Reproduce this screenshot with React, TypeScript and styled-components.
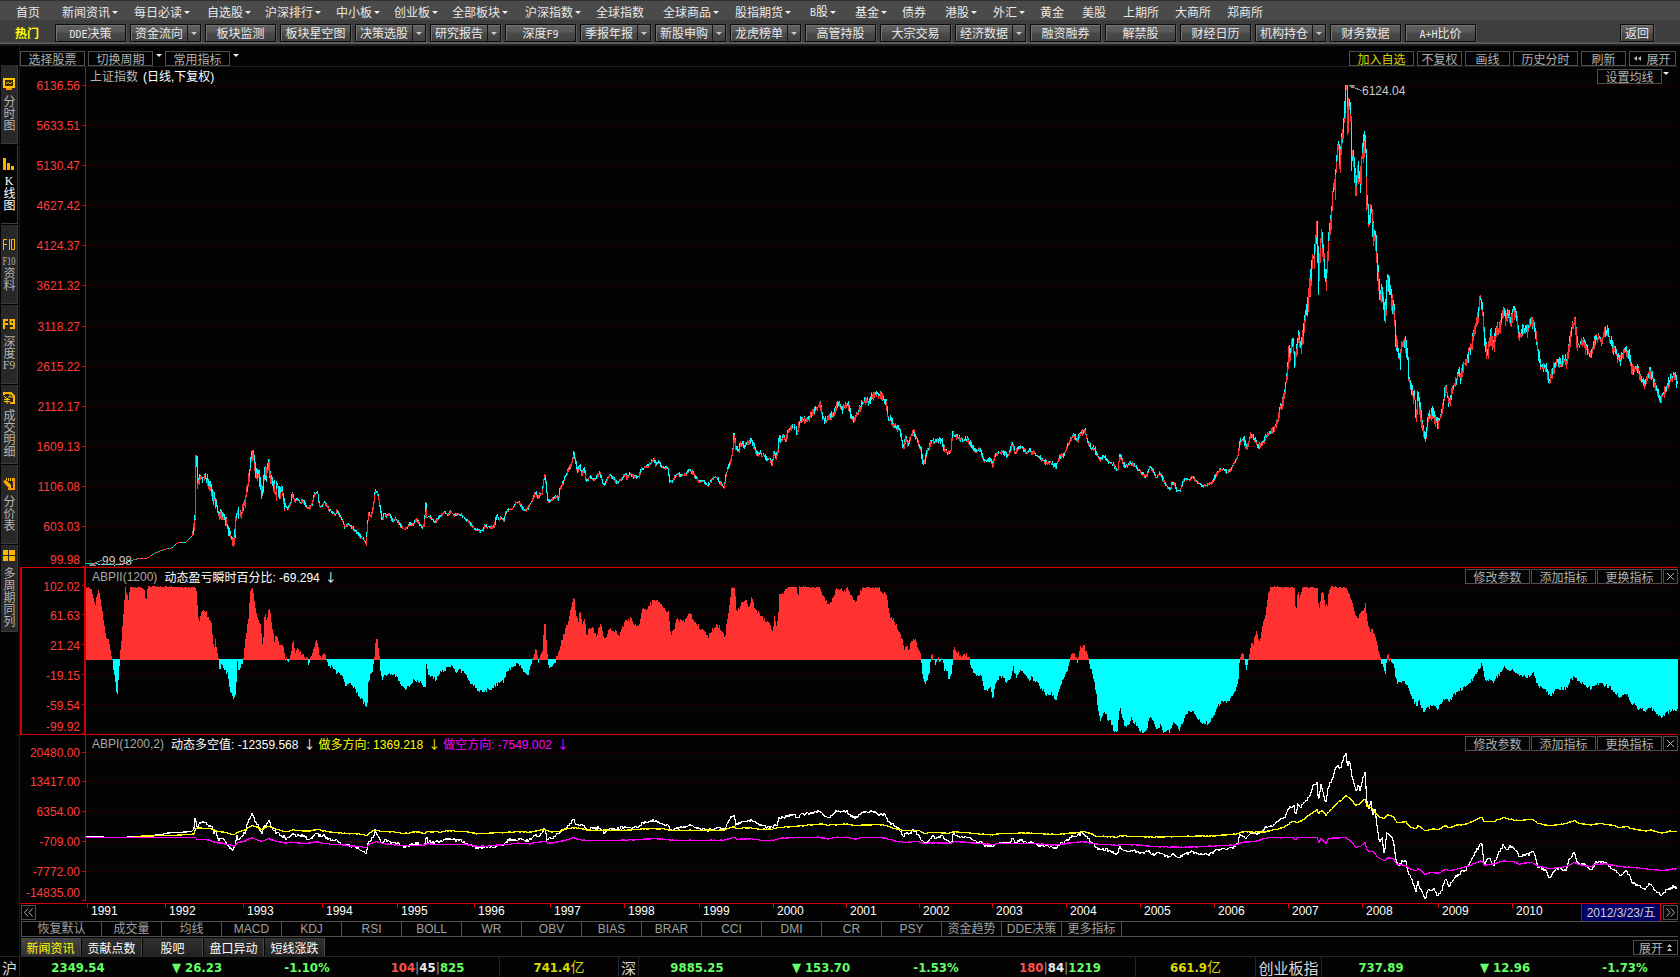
import React from "react";
import styled, { createGlobalStyle, css } from "styled-components";

const RED = "#ff3232";
const CYAN = "#00ffff";
const LINE = "#d20000";
const ARIAL = '"Liberation Sans", Arial, "Noto Sans CJK SC", sans-serif';
const SONG = '"Noto Sans CJK SC", sans-serif';

const Global = createGlobalStyle`
  * { box-sizing: border-box; }
  body { margin: 0; background: #030303; }
  button { margin: 0; padding: 0; border: 0; background: none; font: inherit; color: inherit; cursor: pointer; white-space: nowrap; }
`;

const Page = styled.div`
  display: flex;
  flex-direction: column;
  height: 100vh;
  min-height: 720px;
  background: #030303;
  color: #e8e8e8;
  font-family: ${SONG};
  font-size: 12px;
  line-height: 16px;
  overflow: hidden;
`;

/* ---------- top bars ---------- */

const MenuBar = styled.nav`
  display: grid;
  grid-template-columns:
    46px 72px 73px 58px 71px 58px 58px 73px 71px 67px 72px
    75px 45px 47px 43px 48px 47px 42px 41px 52px 52px 60px;
  align-items: center;
  flex: none;
  height: 20px;
  padding: 2px 0 0 16px;
  border-top: 1px solid #303030;
  background: #4a4a4a;
  overflow: hidden;
`;

const MenuItem = styled.button`
  display: flex;
  align-items: center;
  gap: 2px;
  line-height: 16px;
`;

const Caret = styled.i<{ $color?: string }>`
  width: 0;
  height: 0;
  border: 3px solid transparent;
  border-top-color: ${(p) => p.$color ?? "#f0f0f0"};
  border-bottom-width: 0;
`;

const Latin = styled.span`
  font-family: "DejaVu Sans Mono", monospace;
  font-size: 10px;
`;

const HotBar = styled.div`
  display: flex;
  align-items: center;
  flex: none;
  height: 26px;
  padding: 2px 26px 0 0;
  border-bottom: 2px solid #1c1c1c;
  background: linear-gradient(#3e3e3e, #3e3e3e 22px, #666 23px, #555);
  overflow: hidden;
`;

const HotTitle = styled.span`
  flex: none;
  width: 55px;
  padding-left: 15px;
  color: #ffff00;
  font-weight: 700;
`;

const HotList = styled.div`
  display: flex;
  gap: 4px;
`;

const HotButton = styled.button<{ $narrow?: boolean }>`
  display: flex;
  flex: none;
  justify-content: center;
  width: ${(p) => (p.$narrow ? 34 : 71)}px;
  height: 18px;
  margin-left: ${(p) => (p.$narrow ? "auto" : "0")};
  border: 1px solid #0c0c0c;
  background: linear-gradient(#606060, #585858 7px, #4a4a4a 8px, #404040);
  box-shadow: 1px 1px 0 #585858, inset 1px 1px 0 #747474;
  line-height: 16px;
`;

const HotText = styled.span`
  flex: 1;
  text-align: center;
`;

const HotCaret = styled.span`
  display: flex;
  align-items: center;
  justify-content: center;
  width: 13px;
  border-left: 1px solid #161616;
`;

/* ---------- work area ---------- */

const Work = styled.div`
  display: flex;
  flex: 1;
  min-height: 0;
`;

const SideBar = styled.nav`
  display: flex;
  flex-direction: column;
  gap: 1px;
  flex: none;
  width: 20px;
  padding: 19px 1px 0 1px;
  border-right: 1px solid #1c1c1c;
`;

const SideTab = styled.button<{ $active?: boolean; $tall?: boolean }>`
  display: flex;
  flex-direction: column;
  align-items: center;
  justify-content: center;
  gap: 5px;
  height: ${(p) => (p.$tall ? 87 : 79)}px;
  width: 17px;
  border-right: 1px solid #3c3c3c;
  border-bottom: 1px solid #3c3c3c;
  background: ${(p) => (p.$active ? "#030303" : "#282828")};
  color: ${(p) => (p.$active ? "#ffffff" : "#b4b4b4")};
  svg { display: block; flex: none; }
`;

const SideText = styled.span`
  writing-mode: vertical-rl;
  line-height: 16px;
`;

const Upright = styled.span`
  font-family: "Liberation Serif", serif;
  text-combine-upright: all;
`;

const Main = styled.main`
  display: flex;
  flex-direction: column;
  flex: 1;
  min-width: 0;
  padding-right: 2px;
`;

const ToolBar = styled.div`
  display: flex;
  gap: 3px;
  flex: none;
  height: 21px;
  padding: 5px 2px 0 0;
  border-bottom: 1px solid #1e1e1e;
`;

const Outline = styled.button<{ $w: number; $color?: string }>`
  display: flex;
  align-items: center;
  justify-content: center;
  gap: 4px;
  flex: none;
  width: ${(p) => p.$w}px;
  height: 15px;
  border: 1px solid #505050;
  background: #030303;
  color: ${(p) => p.$color ?? "#b0b0b0"};
  line-height: 13px;
`;

const ToolCaret = styled.button`
  display: flex;
  width: 6px;
  height: 9px;
  padding-top: 3px;
`;

const Spacer = styled.div`
  flex: 1;
`;

/* ---------- chart panels ---------- */

const Panel = styled.section<{ $grow: number; $rule?: boolean }>`
  display: grid;
  grid-template-columns: 61px minmax(0, 1fr);
  grid-template-rows: minmax(0, 1fr);
  flex: ${(p) => p.$grow} 1 0;
  min-height: 0;
  ${(p) => p.$rule && css`border-top: 1px solid ${LINE};`}
`;

const Scale = styled.div<{ $rows: string; $top: number; $boxed?: boolean }>`
  display: grid;
  grid-area: 1 / 1;
  grid-template-rows: ${(p) => p.$rows};
  padding: ${(p) => p.$top}px 1px 0 0;
  border-left: ${(p) => (p.$boxed ? `2px solid ${LINE}` : "0")};
  color: #ff3c3c;
  font-family: ${ARIAL};
  line-height: 14px;
  text-align: right;
`;

const ScaleValue = styled.span`
  min-height: 0;
`;

const Plot = styled.svg`
  grid-area: 1 / 2;
  display: block;
  width: 100%;
  height: 100%;
  shape-rendering: crispEdges;
`;

const PanelHead = styled.header<{ $main?: boolean }>`
  grid-area: 1 / 2;
  display: flex;
  align-items: flex-start;
  align-self: start;
  z-index: 1;
  padding: ${(p) => (p.$main ? "2px 0 0 9px" : "1px 0 0 11px")};
  font-family: ${ARIAL};
`;

const Legend = styled.span<{ $color: string; $space?: number }>`
  margin-right: ${(p) => p.$space ?? 0}px;
  color: ${(p) => p.$color};
  white-space: pre;
`;

const Arrow = styled.span`
  display: inline-block;
  width: 12px;
  margin-left: 5px;
  font-family: ${SONG};
  text-align: center;
`;

const HeadButtons = styled.div<{ $end?: number }>`
  display: flex;
  gap: 1px;
  margin-left: auto;
  padding-right: ${(p) => p.$end ?? 0}px;
  font-family: ${SONG};
`;

const TimeAxis = styled.div`
  display: flex;
  flex: none;
  height: 18px;
  border-top: 1px solid ${LINE};
`;

const TimeStart = styled.div`
  flex: none;
  width: 67px;
  padding: 1px 0 0 1px;
`;

const Years = styled.div`
  display: grid;
  flex: 1;
  grid-template-columns:
    78fr 78fr 79fr 75fr 77fr 76fr 74fr 75fr 74fr 73fr
    73fr 73fr 74fr 74fr 74fr 74fr 74fr 76fr 74fr 69fr;
  min-width: 0;
  color: #ffffff;
  font-family: ${ARIAL};
  line-height: 15px;
`;

const Year = styled.span`
  padding-left: 4px;
  background: linear-gradient(${LINE}, ${LINE}) 0 0 / 1px 4px no-repeat;
`;

const CurrentDate = styled.time`
  flex: none;
  width: 80px;
  border: solid ${LINE};
  border-width: 0 1px;
  background: #000066;
  color: #d0d0d8;
  font-family: ${ARIAL};
  line-height: 18px;
  text-align: center;
`;

const TimeEnd = styled.div`
  padding: 1px 0 0 2px;
`;

/* ---------- bottom ---------- */

const IndicatorBar = styled.nav`
  display: flex;
  flex: none;
  height: 16px;
  margin-left: 1px;
  border: solid #505050;
  border-width: 1px 0 1px 1px;
  overflow: hidden;
`;

const Indicator = styled.button<{ $wide?: boolean }>`
  flex: none;
  width: ${(p) => (p.$wide ? 80 : 60)}px;
  border-right: 1px solid #505050;
  color: #a0a0a0;
  font-family: ${ARIAL};
  line-height: 14px;
`;

const NewsBar = styled.nav`
  display: flex;
  gap: 1px;
  flex: none;
  height: 19px;
  padding: 1px 0 0 1px;
`;

const NewsTab = styled.button<{ $active?: boolean }>`
  width: 60px;
  height: 18px;
  border: solid #484848;
  border-width: 0 1px 0 0;
  background: ${(p) => (p.$active ? "linear-gradient(#484848, #303030)" : "linear-gradient(#303030, #222)")};
  color: ${(p) => (p.$active ? "#ffff00" : "#ffffff")};
  line-height: 17px;
`;

const NewsEnd = styled.div`
  margin-left: auto;
  padding-top: 2px;
`;

const StatusBar = styled.footer`
  display: grid;
  grid-template-columns:
    20px 116fr 122fr 98fr 144fr 119fr 20px 116fr 132fr 98fr 151fr 120fr
    66px 118fr 130fr 110fr;
  flex: none;
  height: 21px;
  border-top: 1px solid #262626;
  color: #64ff64;
  font-family: "DejaVu Sans Condensed", "DejaVu Sans", "Noto Sans CJK SC", sans-serif;
  font-size: 13px;
  font-weight: 700;
  line-height: 22px;
`;

const Cell = styled.span<{ $rule?: boolean }>`
  overflow: hidden;
  border-right: ${(p) => (p.$rule ? "1px solid #262626" : "0")};
  text-align: center;
  white-space: nowrap;
`;

const Market = styled(Cell)`
  color: #d8d8d8;
  font-family: ${SONG};
  font-size: 15px;
  font-weight: 400;
`;

const Amount = styled(Cell)`
  color: #d8d800;
  small { font-family: ${SONG}; font-size: 14px; font-weight: 400; line-height: 16px; }
`;

const Tone = styled.b<{ $color: string }>`
  color: ${(p) => p.$color};
`;

/* ---------- data ---------- */

type Point = [number, number];
type Block = [x0: number, sx: number, y0: number, sy: number, points: string];

/* Each block of samples has its own origin and resolution. */
const decode = (blocks: Block[]): Point[] =>
  blocks.flatMap(([x0, sx, y0, sy, points]) =>
    points.split(" ").map((pair): Point => {
      const [x, y] = pair.split(",").map(Number);
      return [x0 + x / sx, y0 + y / sy];
    })
  );

const price = decode([
  [0, 3, 60, 2.703, "258,1359 345,1364 375,1360 400,1350 420,1346 440,1346 470,1330 500,1320 520,1317 530,1305"],
  [180, 2.904, 380, 3,
    "0,487 18,487 35,468 42,432 44,400 46,235 50,240 52,310 55,300 70,290 80,300 90,325 97,370 98,345 115,410 118,400 130,410 140,445 150,475 157,484 163,420 167,390 172,405 180,395 188,370 195,330 201,290 207,240 211,208 216,240 222,290 228,275 235,320 240,352 246,262 250,290 258,248 265,300 272,310 278,355 281,310 290,340 297,330 303,370 313,388 322,370 327,335 333,365 341,355 350,370 357,360 365,375 373,388 385,370 391,342 400,335 405,380 412,378 420,365 430,385 440,395 452,405 457,390 463,405 472,420 480,443 487,432 500,440 512,457 525,470 535,480 541,495 544,440 548,400 555,410 562,380 566,340 571,330 578,360 584,400 588,425 593,395 600,410 607,400 618,425 626,415 640,435 650,448 660,445 668,430 675,435 687,418 695,430 703,443 710,438 714,362 716,410 727,410 741,428 755,408 770,398 778,405 786,393 795,405 812,402 825,412 840,428 855,446 870,452 880,454 886,438 900,443 912,438 921,405 926,420 933,410 940,425 947,395 956,388 965,388 975,370 985,368 995,385 1005,393 1012,380 1022,365 1033,335 1040,358 1047,335 1050,350 1057,300 1061,280 1064,320 1068,360 1075,365 1085,355 1095,348 1099,362 1103,330 1112,310 1122,285 1132,262 1140,245 1144,220 1148,240 1155,275 1162,255 1167,285 1175,265 1180,305 1190,290 1204,300 1212,288 1220,278 1230,315 1240,300 1249,285 1260,295 1268,308 1280,300 1295,282 1298,298 1307,280 1317,290 1333,292 1340,268 1355,260 1368,248 1377,240 1382,255 1390,245 1400,262 1417,265 1423,305 1430,305 1442,282 1455,285 1468,285 1479,268 1490,280 1508,305 1520,300 1532,318 1545,300"],
  [710, 2.904, 370, 3,
    "8,325 20,322 30,340 42,352 46,320 52,295 60,275 66,245 70,195 76,235 84,245 88,222 95,218 101,235 106,212 112,225 118,207 125,220 132,240 138,255 144,245 152,260 158,255 167,268 174,265 180,284 187,245 192,265 198,240 202,192 207,220 213,192 220,215 226,185 232,178 242,170 250,172 254,195 260,155 268,148 285,150 295,130 305,122 320,104 327,140 338,155 350,140 360,128 368,105 378,108 385,120 400,100 408,130 418,148 430,128 440,105 455,87 461,97 470,82 483,72 495,75 505,88 512,95 518,150 525,145 533,165 543,172 553,182 560,225 564,235 568,200 576,225 583,198 592,185 602,210 612,235 618,275 623,282 628,250 637,235 643,210 652,215 660,212 673,212 680,235 690,250 700,242 704,192 715,200 727,205 735,215 745,205 755,218 765,235 775,245 785,235 795,270 805,275 813,265 822,288 828,255 840,248 852,245 860,255 867,255 875,235 878,217 886,250 895,235 905,232 920,248 930,242 945,253 960,265 978,280 990,278 1005,290 1015,263 1030,250 1040,225 1050,203 1057,198 1067,215 1075,190 1088,182 1097,212 1107,235 1117,235 1127,260 1135,272 1140,260 1148,262 1157,275 1172,285 1184,303 1190,255 1200,280 1207,292 1220,278 1237,290 1252,308 1267,320 1278,290 1287,300 1297,325 1307,308 1317,330 1325,345 1337,362 1341,340 1349,342 1356,362 1365,362 1373,340 1381,325 1392,330 1401,320 1410,332 1430,348 1447,345 1460,335 1468,318 1480,300 1495,298 1502,308 1515,295 1525,275 1532,265"],
  [1180, 3, 80, 3,
    "178,1100 181,1082 192,1078 200,1105 214,1062 225,1080 236,1100 248,1085 265,1065 280,1050 292,1028 300,985 308,970 317,915 323,870 327,810 330,840 337,775 345,845 352,800 357,762 362,805 370,755 377,700 385,660 388,630 393,580 398,530 403,530 408,480 411,440 413,445 416,630 420,520 425,455 430,500 434,560 437,600 442,560 447,470 452,430 457,370 460,320 465,310 470,240 476,190 481,240 485,180 490,160 494,85 498,17 501,17 503,130 508,55 513,120 516,220 520,220 525,280 529,310 534,255 540,295 545,240 550,190 555,165 559,230 560,340 565,380 569,430 574,370 580,450 588,470 592,540 597,600 602,660 607,620 613,690 616,740 620,610 623,580 630,620 637,660 643,680 645,730 650,790 660,835 665,790 675,785 683,820 687,890 695,920 705,960 709,1030 715,935 722,1000 733,1070 740,1055 745,1000 750,1015 758,985 766,1010 773,1035 785,1000 792,960 797,915 808,975 820,920 830,900 838,870 843,895 852,850 860,850 868,810 875,800 883,750 893,715 900,660 905,655 910,710 914,780 923,830 933,755 940,810 950,740 958,755 965,715 973,680 978,715 985,690 991,730 1000,690 1010,710 1018,775 1030,745 1042,755 1050,735 1060,720 1068,770 1075,820 1083,860 1100,865 1108,908 1120,870 1130,845 1142,848 1155,840 1162,850 1168,795 1175,750 1186,722 1192,795 1202,795 1210,780 1218,805 1233,830 1243,785 1258,770 1265,780 1280,748 1290,780 1303,810 1320,840 1335,808 1347,820 1355,870 1367,860 1380,890 1395,915 1410,875 1425,910 1442,960 1458,925 1475,892 1486,890 1492,912"],
]);

const profit = decode([
  [0, 2.8, 560, 3,
    "241,78 255,88 265,138 275,82 285,150 295,230 302,235 313,297 320,350 327,405 334,300 342,195 350,80 359,125 363,78 400,80 408,120 413,78 548,80 555,185 562,160 575,152 584,180 590,178 598,265 602,240 610,297 614,335 618,305 628,330 636,340 643,390 653,418 660,390 663,310 665,285 667,340 680,297 688,220 694,180 700,90 706,82 713,140 722,180 728,190 735,262 740,155 746,180 752,135 760,195 767,240 772,225 780,250 790,250 797,290 805,305 812,285 819,240 825,280 831,265 840,278 850,285 860,297 862,310 868,295 878,260 886,240 893,280 897,297 907,278 912,295 920,315 930,320 940,335 950,335 960,355 966,380 975,365 990,380 1005,405 1018,425 1027,445 1030,360 1040,335 1047,297 1049,245 1055,237 1060,270 1064,330 1070,355 1078,345 1095,335 1105,345 1115,355 1130,385 1145,375 1160,355 1175,365 1190,375 1194,280 1196,340 1205,345 1218,355 1235,330 1262,318 1275,330 1295,330 1310,355 1325,375 1340,390 1375,385 1390,370 1410,360 1420,330 1435,320 1445,305 1455,310 1465,330 1478,345 1487,310 1493,290 1500,265 1506,300 1513,285 1518,270 1522,190 1526,195 1530,260 1533,310 1540,320 1548,310 1555,300 1562,280"],
  [560, 2.8, 560, 3,
    "0,255 10,220 22,180 30,145 38,100 42,150 50,185 55,150 60,190 68,170 74,235 80,205 92,205 100,228 113,187 122,240 130,230 138,200 145,215 157,210 163,232 172,210 181,180 196,177 208,190 220,195 228,150 245,145 262,115 275,125 290,145 303,158 309,220 318,210 326,175 345,185 362,160 375,180 390,205 405,215 413,232 425,210 438,195 450,205 460,235 467,180 474,130 480,80 489,80 492,150 500,145 512,120 520,125 530,142 535,108 545,145 560,165 575,185 587,195 594,218 600,155 603,200 609,180 613,105 625,100 638,78 662,80 665,120 668,78 727,80 735,110 750,130 765,115 773,80 785,88 800,95 803,80 815,110 825,130 840,95 847,80 888,80 900,95 914,105 920,165 930,175 940,195 950,220 957,240 963,270 967,250 975,270 985,240 992,235 1000,262 1010,290 1014,340 1022,368 1033,335 1037,290 1043,285 1050,310 1057,290 1063,300 1070,290 1074,325 1083,330 1088,360 1096,335 1100,265 1113,275 1120,290 1135,283 1145,295 1153,325 1165,345 1178,345 1188,390 1205,380 1211,415 1218,370 1228,350 1240,350 1253,365 1262,345 1268,315 1275,350 1288,325 1298,335 1308,355 1320,350 1333,365 1345,380 1360,400 1375,400 1390,415 1400,370 1412,350 1422,320 1428,290 1438,275 1448,300 1456,262 1467,255 1477,292 1485,325 1492,345 1500,395 1506,455 1513,480 1520,455 1527,455 1532,480 1540,480 1550,510 1560,515 1565,450"],
  [1120, 2.8, 560, 3,
    "0,440 10,490 22,497 30,470 42,490 55,510 72,515 82,470 92,480 100,510 112,495 122,515 140,510 147,480 155,485 165,512 175,480 185,460 203,447 213,470 228,488 248,485 258,470 270,440 285,420 300,425 318,400 330,365 334,290 345,280 353,325 360,297 365,250 372,255 380,210 386,240 392,235 400,190 408,150 412,110 420,78 487,80 489,138 493,140 497,85 502,120 510,78 553,80 555,150 558,150 563,90 570,110 574,138 580,138 583,90 590,78 632,80 645,110 655,150 663,180 673,160 686,135 693,200 700,215 705,205 715,235 724,280 730,300 742,335 748,285 755,297 765,310 772,360 785,370 795,360 803,370 810,400 830,435 835,415 850,455 862,440 875,435 890,445 905,415 920,420 945,390 970,375 990,350 1012,310 1020,355 1035,355 1045,360 1060,340 1075,320 1085,330 1100,325 1118,345 1140,345 1155,335 1170,375 1190,385 1203,405 1220,385 1250,380 1260,355 1272,345 1285,365 1300,370 1318,385 1330,368 1360,372 1378,385 1398,410 1417,400 1430,425 1450,440 1470,450 1485,435 1500,460 1517,470 1530,455 1550,445 1561,447"],
]);

const net = decode([
  [0, 2.8, 740, 3,
    "241,289 286,289 292,292 370,291 410,287 450,284 470,279 500,277 535,275 543,268 547,228 550,255 553,262 560,250 575,248 583,258 592,255 600,280 605,275 612,300 622,295 632,305 640,322 653,328 660,310 664,282 667,300 678,290 688,275 694,245 706,222 713,240 722,255 733,280 740,255 746,260 752,238 760,262 770,275 780,282 795,290 803,298 812,290 820,278 830,288 850,288 862,298 875,290 887,278 893,288 905,285 915,295 930,300 945,300 960,318 975,315 990,320 1010,330 1025,343 1030,310 1037,305 1045,290 1050,272 1060,288 1067,310 1080,300 1095,308 1115,312 1130,322 1150,315 1165,310 1190,315 1194,285 1197,305 1215,308 1235,302 1260,298 1295,303 1310,312 1325,320 1345,325 1370,320 1385,322 1395,315 1410,315 1425,298 1440,303 1455,295 1465,300 1478,302 1490,292 1500,285 1510,295 1518,275 1525,262 1532,298 1545,295 1555,290"],
  [560, 2.8, 560, 3,
    "0,815 15,805 30,790 38,775 45,795 55,795 68,798 75,812 90,805 112,803 122,818 140,808 160,808 180,800 200,803 222,803 230,790 262,782 285,790 303,797 310,812 330,803 362,796 385,803 413,812 440,803 462,808 470,790 480,768 487,768 493,795 510,783 520,788 535,780 550,790 575,800 597,805 601,790 607,800 613,775 635,770 655,763 665,775 675,762 700,760 727,752 735,765 750,775 765,765 775,752 790,757 803,752 812,765 825,773 840,762 855,757 875,752 890,762 905,762 914,768 918,785 935,795 950,808 963,830 967,818 980,820 990,810 1000,820 1010,835 1020,850 1035,840 1040,828 1055,833 1072,828 1080,840 1090,848 1097,845 1101,822 1115,828 1145,832 1160,843 1180,848 1190,858 1205,855 1212,865 1218,855 1232,845 1250,850 1262,845 1268,832 1276,850 1290,840 1305,848 1320,845 1340,855 1355,858 1375,858 1390,865 1400,853 1420,842 1432,828 1450,825 1467,820 1480,835 1492,850 1500,860 1508,868 1530,868 1545,875 1560,882"],
  [1120, 2.8, 560, 3,
    "0,862 20,875 35,870 60,882 80,872 90,885 105,878 125,885 138,893 150,880 165,893 180,882 203,875 220,882 245,885 270,872 290,865 315,865 330,850 334,825 345,828 353,838 362,820 375,818 385,822 395,815 410,800 430,795 450,778 462,768 472,745 487,738 492,765 498,735 505,745 515,730 530,708 540,680 552,668 556,728 563,675 570,705 576,730 583,680 592,665 603,625 612,618 617,630 622,605 633,578 637,620 643,598 650,650 657,680 662,700 668,672 673,695 680,650 686,640 692,730 698,745 702,722 708,765 713,740 720,800 727,850 733,830 740,880 748,815 755,825 765,840 773,905 782,918 790,900 800,905 808,940 820,965 829,995 834,965 842,990 855,1020 862,988 870,995 878,985 890,1008 902,990 911,952 922,980 935,955 950,945 958,928 965,935 975,915 990,885 1003,865 1012,843 1020,912 1035,890 1045,918 1060,880 1073,855 1082,872 1090,860 1108,868 1118,893 1133,882 1145,885 1157,870 1170,920 1190,930 1203,953 1217,930 1230,925 1250,930 1258,895 1272,880 1280,908 1300,912 1318,930 1333,908 1355,905 1370,920 1385,930 1400,948 1417,932 1430,955 1432,965 1450,975 1470,988 1485,970 1500,995 1517,1008 1530,990 1550,980 1561,985"],
]);

const long = decode([
  [0, 2.8, 740, 3,
    "241,292 370,292 400,288 470,287 520,284 543,282 548,265 590,265 610,275 630,277 655,285 665,277 685,270 706,257 720,262 733,268 752,258 775,268 800,275 820,270 862,274 887,268 915,275 960,280 1000,282 1027,286 1035,278 1052,269 1070,275 1095,275 1130,281 1165,275 1190,280 1194,275 1235,276 1255,272 1300,275 1335,281 1370,279 1410,278 1450,275 1480,277 1525,268 1540,276 1560,274"],
  [560, 2.8, 560, 3,
    "0,813 15,808 38,803 60,806 80,811 180,811 250,806 290,807 310,811 460,811 470,806 487,800 495,806 535,803 560,808 595,808 612,802 660,799 727,792 750,796 803,792 825,797 890,793 914,797 935,805 963,811 1005,812 1022,821 1040,817 1085,820 1105,815 1145,819 1190,823 1212,825 1228,821 1300,819 1345,821 1390,824 1425,820 1467,815 1490,822 1500,828 1560,832"],
  [1120, 2.8, 560, 3,
    "0,828 100,831 180,829 260,828 325,822 345,815 400,817 440,808 462,800 485,783 495,788 510,782 530,765 552,750 556,762 565,750 577,765 595,745 612,725 620,722 633,706 645,715 660,735 673,730 686,718 692,740 705,745 725,770 740,775 750,765 765,770 775,788 800,785 812,800 830,808 835,797 855,812 875,806 890,810 911,797 922,803 945,795 970,793 995,780 1012,770 1020,785 1045,785 1075,773 1095,778 1118,782 1155,778 1170,790 1203,797 1250,790 1272,781 1285,790 1318,795 1340,790 1378,795 1398,803 1417,799 1432,806 1470,813 1485,810 1517,820 1540,813 1561,814"],
]);

const short = decode([
  [0, 2.8, 740, 3,
    "241,292 547,292 552,298 585,300 605,308 625,310 655,318 665,310 685,303 706,293 720,300 733,305 752,296 770,303 800,309 820,306 850,311 887,306 915,312 960,315 1027,322 1035,312 1052,306 1080,312 1130,317 1190,315 1194,311 1235,314 1300,313 1340,320 1400,315 1450,310 1480,312 1525,303 1535,310 1560,306"],
  [560, 2.8, 560, 3,
    "0,845 20,840 38,833 50,838 75,842 180,841 262,836 303,839 325,841 460,841 487,832 495,838 535,836 570,841 597,841 612,836 640,833 727,832 750,837 775,832 803,832 825,837 850,832 890,832 914,835 935,842 963,847 1005,845 1022,852 1040,848 1090,850 1105,845 1150,848 1190,852 1212,854 1228,850 1330,851 1375,855 1390,855 1430,848 1467,845 1500,852 1560,856"],
  [1120, 2.8, 560, 3,
    "0,853 50,855 100,860 180,862 240,859 325,855 340,847 370,845 420,833 487,833 491,840 500,833 553,832 556,850 563,836 577,850 585,835 632,833 645,842 660,862 673,860 686,848 693,872 710,877 725,893 740,903 750,893 765,895 775,912 800,917 812,927 830,933 835,925 855,943 870,937 890,940 911,928 922,932 945,927 975,918 1012,902 1020,915 1045,912 1075,903 1100,905 1118,912 1155,907 1170,918 1203,926 1250,920 1272,908 1290,915 1318,920 1330,912 1365,912 1400,920 1430,922 1470,926 1517,932 1561,926"],
]);

/* ---------- chart geometry ---------- */

const FIRST = 86;
const LAST = 1677;

/* Repeatable pseudo-random number in 0..1 for a column. */
const jitter = (n: number) => {
  const v = Math.sin(n * 12.9898 + 4.1414) * 43758.5453;
  return v - Math.floor(v);
};

const perColumn = (points: Point[]): number[] => {
  const out: number[] = [];
  let i = 0;
  for (let x = FIRST; x <= LAST + 1; x++) {
    while (i < points.length - 2 && points[i + 1][0] < x) i++;
    const [ax, ay] = points[i];
    const [bx, by] = points[i + 1];
    const t = Math.max(0, Math.min(1, (x - ax) / (bx - ax || 1)));
    out.push(ay + (by - ay) * t);
  }
  return out;
};

const candles = () => {
  const ys = perColumn(price);
  let up = "";
  let down = "";
  for (let i = 0; i <= LAST - FIRST; i++) {
    const x = FIRST + i;
    const rising = ys[i + 1] < ys[i];
    const wild = (x < 285 ? 5 : 0) + (x > 1300 && x < 1440 ? 5 : 0);
    const swing = x < 193 ? 0 : 2 + wild + Math.max(0, 480 - ys[i]) / 28;
    const top = Math.max(85, Math.round(Math.min(ys[i], ys[i + 1]) - jitter(x) * Math.min(swing, 6)));
    const end = Math.round(Math.max(ys[i], ys[i + 1]) + jitter(x + 0.5) * swing);
    const height = Math.max(1, end - top);
    const bias = rising ? 0.3 : 0.7;
    const cut = Math.round(height * Math.max(0, Math.min(1, bias + (jitter(x + 0.25) - 0.5) * 1.3)));
    const downFirst = jitter(x + 0.75) > 0.2;
    const first = downFirst ? cut : height - cut;
    const a = first > 0 ? `M${x} ${top}h1v${first}h-1z` : "";
    const b = height > first ? `M${x} ${top + first}h1v${height - first}h-1z` : "";
    if (downFirst) {
      down += a;
      up += b;
    } else {
      up += a;
      down += b;
    }
  }
  return { up, down };
};

const ZERO = 659;

const histogram = () => {
  let up = "";
  let down = "";
  perColumn(profit).slice(0, -1).forEach((v, i) => {
    const x = FIRST + i;
    const rough = v < 588 ? jitter(x) * 1.4 : (jitter(x) - 0.5) * 4;
    const y = Math.max(586, Math.min(732, Math.round(v + rough)));
    if (y < ZERO) up += `M${x} ${y}h1V660h-1z`;
    else down += `M${x} ${ZERO}h1V${y + 1}h-1z`;
  });
  return { up, down };
};

const trace = (points: Point[], rough: number) =>
  "M" +
  perColumn(points)
    .slice(0, -1)
    .map((y, i) => {
      const x = FIRST + i;
      const amount = x < 195 ? 0 : rough;
      return `${x} ${(y + (jitter(x + rough) - 0.5) * amount).toFixed(1)}`;
    })
    .join("L");

const bars = candles();
const columns = histogram();

const Grid = ({ ticks, bottom }: { ticks: number[]; bottom: number }) => (
  <>
    {ticks.map((y) => (
      <React.Fragment key={y}>
        <path d={`M90 ${y + 0.5}H1676`} stroke="#480000" strokeDasharray="1 3" />
        <path d={`M82 ${y + 0.5}H85`} stroke={LINE} />
      </React.Fragment>
    ))}
    <path d={`M85.5 0V${bottom}`} stroke={LINE} />
  </>
);

/* ---------- icons of the side tabs ---------- */

const icons = {
  minute: (
    <>
      <path d="M1 1h10v8h-10z" fill="#3a2600" stroke="#ffc400" strokeWidth="2" />
      <path d="M3 6l2-2 2 2 2-2" fill="none" stroke="#ffc400" />
      <path d="M3 10h6v2h-6z" fill="#ff9600" />
    </>
  ),
  kline: <path d="M0 0h3v12h-3zM4 5h3v7h-3zM8 8h3v4h-3z" fill="#ffae00" />,
  f10: <path d="M.5 12V1.5H4M.5 6.5H4M6.5 1v11M8.5 1.5h3v10h-3z" fill="none" stroke="#ffb400" />,
  f9: <path d="M1 11V2h4M1 6h4M11 6H7.500V2H11v8H7" fill="none" stroke="#ffb400" strokeWidth="2" />,
  deal: (
    <>
      <path d="M1 3V1h7l3 3v7H7" fill="none" stroke="#ffb400" strokeWidth="2" />
      <path d="M7 2v3h3" fill="none" stroke="#ffb400" />
      <path d="M1 4l3 3 3-3M4 7v5M1 7.500h6M1 9.500h6" fill="none" stroke="#ffc800" />
    </>
  ),
  layers: (
    <>
      <path d="M0 3l3-1 5 5v3H6L2 6z" fill="#ffae00" />
      <path d="M3.500 0v2M5.500 0v3M7.500 0v3M9.500 0v3" stroke="#ffc800" />
      <path d="M11 0v11H5" fill="none" stroke="#ff9600" strokeWidth="2" />
    </>
  ),
  grid: <path d="M0 0h5v5H0zM6 0h6v5H6zM0 6h5v5H0zM6 6h6v5H6z" fill="#ffb400" />,
};

const sideTabs: { icon: keyof typeof icons; text: string; tall?: boolean }[] = [
  { icon: "minute", text: "分时图" },
  { icon: "kline", text: "K线图" },
  { icon: "f10", text: "F10资料" },
  { icon: "f9", text: "深度F9" },
  { icon: "deal", text: "成交明细" },
  { icon: "layers", text: "分价表" },
  { icon: "grid", text: "多周期同列", tall: true },
];

const menus = [
  "首页", "新闻资讯▾", "每日必读▾", "自选股▾", "沪深排行▾", "中小板▾", "创业板▾", "全部板块▾",
  "沪深指数▾", "全球指数", "全球商品▾", "股指期货▾", "B股 ▾", "基金▾", "债券", "港股▾", "外汇▾",
  "黄金", "美股", "上期所", "大商所", "郑商所",
];

const hot = [
  "DDE决策", "资金流向▾", "板块监测", "板块星空图", "决策选股▾", "研究报告▾", "深度F9", "季报年报▾",
  "新股申购▾", "龙虎榜单▾", "高管持股", "大宗交易", "经济数据▾", "融资融券", "解禁股", "财经日历",
  "机构持仓▾", "财务数据", "A+H比价",
];

const indicators = [
  "恢复默认", "成交量", "均线", "MACD", "KDJ", "RSI", "BOLL", "WR", "OBV", "BIAS", "BRAR", "CCI",
  "DMI", "CR", "PSY", "资金趋势", "DDE决策", "更多指标",
];

const priceTicks = [85, 125, 165, 205, 245, 285, 326, 366, 406, 446, 486, 526, 566];
const priceScale = [
  "6136.56", "5633.51", "5130.47", "4627.42", "4124.37", "3621.32", "3118.27", "2615.22", "2112.17",
  "1609.13", "1106.08", "603.03", "99.98",
];

/* Latin letters take their own face, Chinese ones the regular one. */
const Mixed = ({ text, as: Face = Latin }: { text: string; as?: React.ElementType }) => (
  <>
    {text.split(/([A-Za-z0-9+]+)/).map((part, i) => (i % 2 ? <Face key={i}>{part}</Face> : part))}
  </>
);

const EditButtons = () => (
  <HeadButtons>
    <Outline $w={65}>修改参数</Outline>
    <Outline $w={65}>添加指标</Outline>
    <Outline $w={65}>更换指标</Outline>
    <Outline $w={15} aria-label="关闭">
      <svg width="7" height="7" viewBox="0 0 7 7">
        <path d="M0 0l7 7M7 0l-7 7" stroke="#b0b0b0" />
      </svg>
    </Outline>
  </HeadButtons>
);

const Chevrons = ({ back }: { back?: boolean }) => (
  <svg width="9" height="9" viewBox="0 0 9 9">
    <path
      d={back ? "M4 0.500l-3.500 4 3.500 4M8.500 0.500l-3.500 4 3.500 4" : "M.5 0.500l3.500 4-3.500 4M5 0.500l3.500 4-3.500 4"}
      fill="none"
      stroke="#b0b0b0"
    />
  </svg>
);

const Quote = ({ last, change, rate }: { last: string; change: string; rate: string }) => (
  <>
    <Cell>{last}</Cell>
    <Cell>▼ {change}</Cell>
    <Cell>{rate}</Cell>
  </>
);

const Breadth = ({ up, flat, down }: { up: string; flat: string; down: string }) => (
  <Cell $rule>
    <Tone $color="#ff5050">{up}</Tone>
    <Tone $color="#808080">|</Tone>
    <Tone $color="#e8e8e8">{flat}</Tone>
    <Tone $color="#808080">|</Tone>
    {down}
  </Cell>
);

export default function App() {
  return (
    <Page>
      <Global />
      <MenuBar>
        {menus.map((item) => (
          <MenuItem key={item}>
            <span><Mixed text={item.replace("▾", "")} /></span>
            {item.endsWith("▾") && <Caret />}
          </MenuItem>
        ))}
      </MenuBar>
      <HotBar>
        <HotTitle>热门</HotTitle>
        <HotList>
          {hot.map((item) => (
            <HotButton key={item}>
              <HotText><Mixed text={item.replace("▾", "")} /></HotText>
              {item.endsWith("▾") && <HotCaret><Caret $color="#c8c8c8" /></HotCaret>}
            </HotButton>
          ))}
        </HotList>
        <HotButton $narrow>返回</HotButton>
      </HotBar>

      <Work>
        <SideBar>
          {sideTabs.map((tab) => (
            <SideTab key={tab.icon} $active={tab.icon === "kline"} $tall={tab.tall}>
              <svg width="12" height="12" viewBox="0 0 12 12">{icons[tab.icon]}</svg>
              <SideText><Mixed text={tab.text} as={Upright} /></SideText>
            </SideTab>
          ))}
        </SideBar>

        <Main>
          <ToolBar>
            <Outline $w={65}>选择股票</Outline>
            <Outline $w={65}>切换周期</Outline>
            <ToolCaret aria-label="周期"><Caret /></ToolCaret>
            <Outline $w={65}>常用指标</Outline>
            <ToolCaret aria-label="指标"><Caret /></ToolCaret>
            <Spacer />
            <Outline $w={65} $color="#d8d800">加入自选</Outline>
            <Outline $w={45}>不复权</Outline>
            <Outline $w={45}>画线</Outline>
            <Outline $w={65}>历史分时</Outline>
            <Outline $w={45}>刷新</Outline>
            <Outline $w={47}>
              <svg width="8" height="5" viewBox="0 0 8 5">
                <path d="M3 0v5L0 2.500zM7 0v5L4 2.500z" fill="#c0c0c0" />
              </svg>
              展开
            </Outline>
          </ToolBar>

          <Panel $grow={500}>
            <Scale $top={12} $rows="40fr 40fr 40fr 40fr 40fr 41fr 40fr 40fr 40fr 40fr 40fr 33fr 14fr">
              {priceScale.map((v) => <ScaleValue key={v}>{v}</ScaleValue>)}
            </Scale>
            <Plot viewBox="81 67 1597 500" preserveAspectRatio="none">
              <Grid ticks={priceTicks} bottom={567} />
              <path d={bars.up} fill={RED} />
              <path d={bars.down} fill={CYAN} />
              <path d="M1348 85h8l-4 3zM88 566l3-3h2l3 3z" fill="#909090" />
              <path d="M1353 87l9 4M95 563l7-3" stroke="#909090" />
              <g fill="#c8c8c8" fontFamily={ARIAL} fontSize="12">
                <text x="1362" y="95">6124.04</text>
                <text x="102" y="565">99.98</text>
              </g>
            </Plot>
            <PanelHead $main>
              <Legend $color="#b4b4b4" $space={5}>上证指数</Legend>
              <Legend $color="#ffffff">(日线,下复权)</Legend>
              <HeadButtons $end={9}>
                <Outline $w={65}>设置均线</Outline>
                <ToolCaret aria-label="均线"><Caret /></ToolCaret>
              </HeadButtons>
            </PanelHead>
          </Panel>

          <Panel $grow={166} $rule>
            <Scale $boxed $top={12} $rows="29fr 30fr 30fr 30fr 21fr 14fr">
              {["102.02", "61.63", "21.24", "-19.15", "-59.54", "-99.92"].map((v) => (
                <ScaleValue key={v}>{v}</ScaleValue>
              ))}
            </Scale>
            <Plot viewBox="81 568 1597 166" preserveAspectRatio="none">
              <Grid ticks={[585, 614, 644, 674, 704, 733]} bottom={734} />
              <path d="M84.500 568V734" stroke={LINE} />
              <path d={columns.up} fill={RED} />
              <path d={columns.down} fill={CYAN} />
            </Plot>
            <PanelHead>
              <Legend $color="#a8a8a8" $space={7}>ABPII(1200)</Legend>
              <Legend $color="#ffffff">动态盈亏瞬时百分比: -69.294<Arrow>↓</Arrow></Legend>
              <EditButtons />
            </PanelHead>
          </Panel>

          <Panel $grow={168} $rule>
            <Scale $top={11} $rows="29fr 30fr 30fr 30fr 21fr 17fr">
              {["20480.00", "13417.00", "6354.00", "-709.00", "-7772.00", "-14835.00"].map((v) => (
                <ScaleValue key={v}>{v}</ScaleValue>
              ))}
            </Scale>
            <Plot viewBox="81 735 1597 168" preserveAspectRatio="none">
              <Grid ticks={[752, 781, 811, 841, 871, 900]} bottom={901} />
              <g fill="none">
                <path d={trace(net, 2.6)} stroke="#ffffff" strokeWidth="1.200" />
                <path d={trace(long, 0.8)} stroke="#ffff00" strokeWidth="1.300" />
                <path d={trace(short, 0.7)} stroke="#ff00ff" strokeWidth="1.300" />
              </g>
            </Plot>
            <PanelHead>
              <Legend $color="#a8a8a8" $space={7}>ABPI(1200,2)</Legend>
              <Legend $color="#ffffff" $space={3}>动态多空值: -12359.568<Arrow>↓</Arrow></Legend>
              <Legend $color="#ffff00" $space={3}>做多方向: 1369.218<Arrow>↓</Arrow></Legend>
              <Legend $color="#ff00ff">做空方向: -7549.002<Arrow>↓</Arrow></Legend>
              <EditButtons />
            </PanelHead>
          </Panel>

          <TimeAxis>
            <TimeStart>
              <Outline $w={15} aria-label="向前"><Chevrons back /></Outline>
            </TimeStart>
            <Years>
              {Array.from({ length: 20 }, (_, i) => <Year key={i}>{1991 + i}</Year>)}
            </Years>
            <CurrentDate dateTime="2012-03-23">2012/3/23/五</CurrentDate>
            <TimeEnd>
              <Outline $w={15} aria-label="向后"><Chevrons /></Outline>
            </TimeEnd>
          </TimeAxis>

          <IndicatorBar>
            {indicators.map((name, i) => <Indicator key={name} $wide={i === 0}>{name}</Indicator>)}
          </IndicatorBar>

          <NewsBar>
            {["新闻资讯", "贡献点数", "股吧", "盘口异动", "短线涨跌"].map((name, i) => (
              <NewsTab key={name} $active={i === 0}>{name}</NewsTab>
            ))}
            <NewsEnd>
              <Outline $w={45}>
                展开
                <svg width="5" height="8" viewBox="0 0 5 8">
                  <path d="M0 3h5L2.500 0zM0 7h5L2.500 4z" fill="#c0c0c0" />
                </svg>
              </Outline>
            </NewsEnd>
          </NewsBar>
        </Main>
      </Work>

      <StatusBar>
        <Market $rule>沪</Market>
        <Quote last="2349.54" change="26.23" rate="-1.10%" />
        <Breadth up="104" flat="45" down="825" />
        <Amount $rule>741.4<small>亿</small></Amount>
        <Market $rule>深</Market>
        <Quote last="9885.25" change="153.70" rate="-1.53%" />
        <Breadth up="180" flat="84" down="1219" />
        <Amount $rule>661.9<small>亿</small></Amount>
        <Market $rule>创业板指</Market>
        <Quote last="737.89" change="12.96" rate="-1.73%" />
      </StatusBar>
    </Page>
  );
}
